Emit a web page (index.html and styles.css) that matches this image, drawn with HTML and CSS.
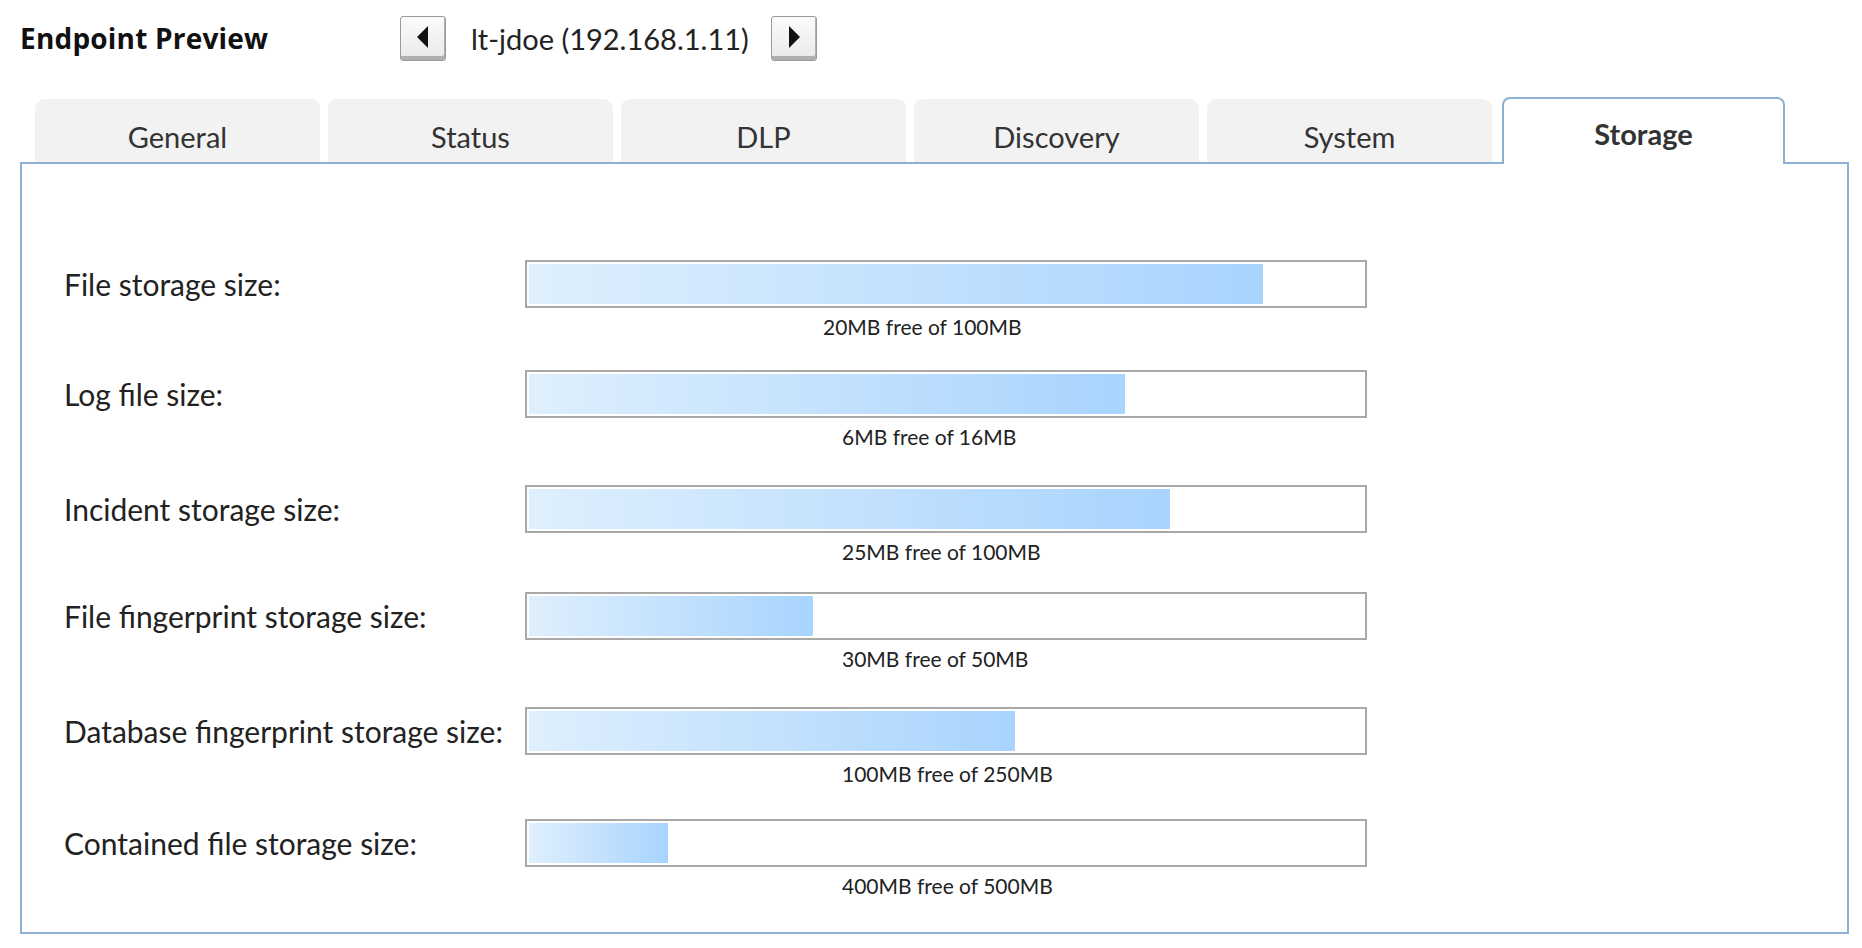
FILE: index.html
```html
<!DOCTYPE html>
<html>
<head>
<meta charset="utf-8">
<title>Endpoint Preview</title>
<link rel="stylesheet" href="styles.css">
</head>
<body>
<header class="topbar">
  <h1 class="title">Endpoint Preview</h1>
  <div class="nav">
    <button class="navbtn" aria-label="Previous">
      <svg width="12" height="22" viewBox="0 0 12 22"><polygon points="11,0 11,22 0,11" fill="#111"/></svg>
    </button>
    <span class="host">lt-jdoe (192.168.1.11)</span>
    <button class="navbtn" aria-label="Next">
      <svg width="12" height="22" viewBox="0 0 12 22"><polygon points="1,0 1,22 12,11" fill="#111"/></svg>
    </button>
  </div>
</header>
<nav class="tabs">
  <div class="tab">General</div>
  <div class="tab">Status</div>
  <div class="tab">DLP</div>
  <div class="tab">Discovery</div>
  <div class="tab">System</div>
  <div class="tab active">Storage</div>
</nav>
<section class="panel">
  <div class="rows">
    <div class="label">File storage size:</div>
    <div class="cell">
      <div class="meter"><div class="fill" style="width:88%"></div></div>
      <div class="caption shift">20MB free of 100MB</div>
    </div>
    <div class="label">Log file size:</div>
    <div class="cell">
      <div class="meter"><div class="fill" style="width:71.5%"></div></div>
      <div class="caption">6MB free of 16MB</div>
    </div>
    <div class="label">Incident storage size:</div>
    <div class="cell">
      <div class="meter"><div class="fill" style="width:76.8%"></div></div>
      <div class="caption">25MB free of 100MB</div>
    </div>
    <div class="label">File fingerprint storage size:</div>
    <div class="cell">
      <div class="meter"><div class="fill" style="width:34%"></div></div>
      <div class="caption">30MB free of 50MB</div>
    </div>
    <div class="label">Database fingerprint storage size:</div>
    <div class="cell">
      <div class="meter"><div class="fill" style="width:58.3%"></div></div>
      <div class="caption">100MB free of 250MB</div>
    </div>
    <div class="label">Contained file storage size:</div>
    <div class="cell">
      <div class="meter"><div class="fill" style="width:16.7%"></div></div>
      <div class="caption">400MB free of 500MB</div>
    </div>
  </div>
</section>
</body>
</html>
```
FILE: styles.css
```css
* { box-sizing: border-box; }
html, body { margin: 0; padding: 0; background: #fff; }
body {
  font-family: "Lato", "Liberation Sans", sans-serif;
  color: #222;
  width: 1862px;
  height: 948px;
  overflow: hidden;
}
.topbar {
  display: flex;
  align-items: center;
  height: 76px;
  padding-left: 20px;
}
.title {
  margin: 0;
  width: 380px;
  font-family: "Open Sans", "Lato", sans-serif;
  font-size: 28px;
  font-weight: 700;
  letter-spacing: 0.2px;
  color: #111;
}
.nav {
  display: flex;
  align-items: center;
}
.navbtn {
  width: 46px;
  height: 45px;
  padding: 0;
  margin: 0;
  border: 1px solid #9a9a9a;
  border-radius: 3px;
  background: linear-gradient(#fbfbfb, #e9e9e9);
  box-shadow: inset -1px -4px 0 #b0b0b0;
  display: flex;
  align-items: center;
  justify-content: center;
  padding-bottom: 3px;
}
.host {
  font-size: 29px;
  color: #222;
  margin: 0 22px 0 25px;
}
.tabs {
  display: flex;
  align-items: flex-end;
  gap: 8px;
  height: 65px;
  margin-top: 21px;
  padding-left: 35px;
  position: relative;
  z-index: 1;
}
.tab {
  width: 285px;
  height: 63px;
  background: #f2f2f2;
  border-radius: 9px 9px 0 0;
  display: flex;
  align-items: center;
  justify-content: center;
  padding-top: 11px;
  font-size: 29px;
  color: #333;
}
.tab.active {
  width: 283px;
  height: 67px;
  margin-bottom: -2px;
  margin-left: 2px;
  background: #fff;
  border: 2px solid #8cb1d3;
  border-bottom: none;
  border-radius: 8px 8px 0 0;
  font-weight: 700;
  padding-top: 3px;
  padding-bottom: 0;
}
.panel {
  margin-left: 20px;
  width: 1829px;
  height: 772px;
  border: 2px solid #8cb1d3;
}
.rows {
  display: grid;
  grid-template-columns: 461px 842px;
  grid-template-rows: 110px 115px 107px 115px 112px auto;
  padding-top: 96px;
  padding-left: 42px;
}
.label {
  font-size: 30px;
  color: #222;
  height: 48px;
  display: flex;
  align-items: center;
}
.meter {
  height: 48px;
  border: 2px solid #a8a8a8;
  padding: 2px;
  background: #fff;
}
.fill {
  height: 100%;
  background: linear-gradient(to right, #dfeffd, #a8d4fe);
}
.caption {
  font-size: 21px;
  line-height: 24px;
  margin-top: 7px;
  padding-left: 317px;
  color: #222;
}
.caption.shift {
  padding-left: 298px;
}
```
